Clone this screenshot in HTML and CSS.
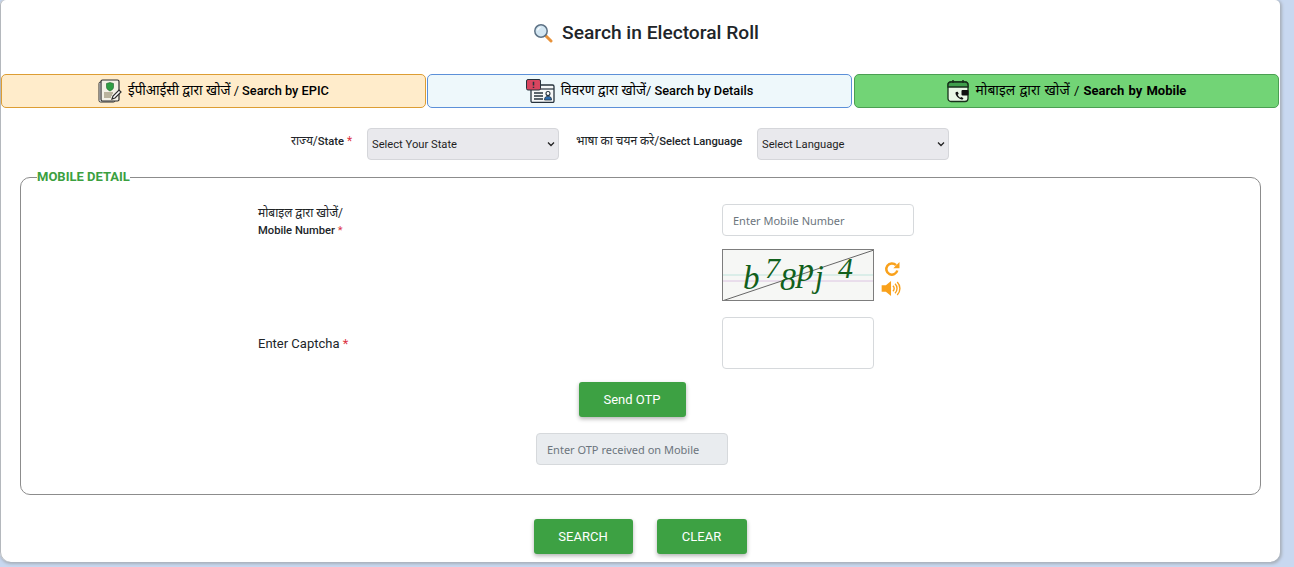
FILE: index.html
```html
<!DOCTYPE html>
<html lang="hi">
<head>
<meta charset="utf-8">
<title>Search in Electoral Roll</title>
<link rel="stylesheet" href="styles.css">
</head>
<body>
<main class="card">
  <h1 class="title">
    <svg class="title-icon" viewBox="0 0 20 20" width="20" height="20">
      <path d="M12.5 12.5l5.5 5.5" stroke="#e8923a" stroke-width="3" stroke-linecap="round"/>
      <circle cx="8" cy="8" r="6.2" fill="#d3e6f2" stroke="#5d7285" stroke-width="1.5"/>
      <path d="M4.6 7.5a3.6 3.6 0 0 1 3-3" fill="none" stroke="#fff" stroke-width="1.2"/>
    </svg>
    <span>Search in Electoral Roll</span>
  </h1>

  <nav class="tabs">
    <button class="tab tab-epic" type="button">
      <svg class="tab-icon" viewBox="0 0 24 24" width="24" height="24">
        <rect x="1" y="3" width="16" height="20" rx="1.5" fill="#fff" stroke="#2d2d2d" stroke-width="1"/>
        <rect x="3" y="1" width="18" height="21" rx="1.5" fill="#f4f1e6" stroke="#2d2d2d" stroke-width="1.2"/>
        <path d="M8.5 4.5l3.5-1 3.5 1v3.5c0 2-1.5 3-3.5 4-2-1-3.500-2-3.500-4z" fill="#2f9e44" stroke="#1c5f2a" stroke-width=".6"/>
        <path d="M6 14h9M6 16h8M6 18h7" stroke="#a79f85" stroke-width="1.300"/>
        <path d="M14 20l1-3 6-6 2 2-6 6z" fill="#fff" stroke="#2d2d2d" stroke-width="1.200"/>
      </svg>
      <span class="tab-text"><span class="tab-hi">ईपीआईसी द्वारा खोजें</span> / <b>Search by EPIC</b></span>
    </button>
    <button class="tab tab-details" type="button">
      <svg class="tab-icon tab-icon-wide" viewBox="0 0 29 24" width="29" height="24">
        <rect x="5" y="6" width="23" height="17.500" rx="1.500" fill="#f6f8f8" stroke="#27333d" stroke-width="1.300"/>
        <path d="M5 10h23" stroke="#27333d" stroke-width="1.200"/>
        <path d="M8 14h9M8 17h9M8 20h9" stroke="#27333d" stroke-width="1.300"/>
        <circle cx="22" cy="14.500" r="2" fill="#fff" stroke="#27333d" stroke-width="1.100"/>
        <path d="M18.500 21c0-3 1.500-3.700 3.500-3.700s3.500.7 3.500 3.700z" fill="#2b6cb0" stroke="#27333d" stroke-width=".8"/>
        <rect x=".5" y=".5" width="14" height="10.500" rx="1.500" fill="#d9455f" stroke="#27333d" stroke-width="1"/>
        <path d="M7.500 2.800v3.700M7.500 7.800v1.200" stroke="#27333d" stroke-width="1.500"/>
      </svg>
      <span class="tab-text"><span class="tab-hi">विवरण द्वारा खोजें</span>/ <b>Search by Details</b></span>
    </button>
    <button class="tab tab-mobile" type="button">
      <svg class="tab-icon" viewBox="0 0 23 24" width="23" height="24">
        <rect x="1" y="3" width="20" height="19.500" rx="3" fill="#e9f7e6" stroke="#17301b" stroke-width="1.300"/>
        <path d="M1 8V6a3 3 0 0 1 3-3h14a3 3 0 0 1 3 3v2z" fill="#3f9e4c" stroke="#17301b" stroke-width="1.300"/>
        <path d="M6 1v3M16 1v3" stroke="#17301b" stroke-width="1.500"/>
        <path d="M9 13c-1.500 1 .5 6 5.500 7.500 1.500 .3 2-1 1.700-1.600l-2-1-1 .8c-1-.5-2-1.600-2.500-3l1-1-1-2z" fill="#111"/>
        <rect x="14.500" y="11" width="7" height="5.500" rx="1" fill="#111"/>
      </svg>
      <span class="tab-text"><span class="tab-hi">मोबाइल द्वारा खोजें</span> / <b>Search by Mobile</b></span>
    </button>
  </nav>

  <section class="selectors">
    <label class="select-label select-label-state" for="state">राज्य/<b>State</b> <i class="req">*</i></label>
    <select class="select" id="state"><option>Select Your State</option></select>
    <label class="select-label select-label-lang" for="language">भाषा का चयन करे/<b>Select Language</b></label>
    <select class="select" id="language"><option>Select Language</option></select>
  </section>

  <fieldset class="panel">
    <legend class="panel-title">MOBILE DETAIL</legend>
    <div class="form-grid">
      <label class="field-label" for="mobile"><span class="hi">मोबाइल द्वारा खोजें/</span><b>Mobile Number</b> <i class="req">*</i></label>
      <input class="input" id="mobile" type="text" placeholder="Enter Mobile Number">

      <div class="captcha-cell">
        <svg class="captcha" viewBox="0 0 152 52" width="152" height="52">
          <rect width="152" height="52" fill="#f6f7f5"/>
          <path d="M0 26h152" stroke="#bfe4dc" stroke-width="1"/>
          <path d="M0 32h152" stroke="#dcc4e2" stroke-width="1"/>
          <path d="M0 52L152 1" stroke="#666" stroke-width="1"/>
          <g class="captcha-text">
            <text x="21" y="40" font-size="33">b</text>
            <text x="43" y="29" font-size="30">7</text>
            <text x="58" y="41" font-size="32">8</text>
            <text x="75" y="32" font-size="34">p</text>
            <text x="93" y="38" font-size="31">j</text>
            <text x="116" y="29" font-size="30">4</text>
          </g>
          <rect x=".5" y=".5" width="151" height="51" fill="none" stroke="#7d7d7d"/>
        </svg>
        <div class="captcha-actions">
          <svg viewBox="0 0 16 16" width="16" height="16">
            <path d="M13.300 9.500a5.600 5.600 0 1 1-1.300-5.300" fill="none" stroke="#f9a11b" stroke-width="2.500"/>
            <path d="M15.500 1v6.200H9.300z" fill="#f9a11b"/>
          </svg>
          <svg viewBox="0 0 21 16" width="21" height="15">
            <path d="M0 4.500h4.500L10 0v16l-5.500-4.500H0z" fill="#f9a11b"/>
            <path d="M12 5a4 4 0 0 1 0 6M14.300 3a7 7 0 0 1 0 10M16.600 1a10 10 0 0 1 0 14" fill="none" stroke="#f9a11b" stroke-width="1.500"/>
          </svg>
        </div>
      </div>

      <label class="field-label field-label-captcha" for="captcha">Enter Captcha <i class="req">*</i></label>
      <input class="input input-captcha" id="captcha" type="text">
    </div>
    <div class="otp-block">
      <button class="btn btn-otp" type="button">Send OTP</button>
      <input class="input input-otp" type="text" placeholder="Enter OTP received on Mobile" disabled>
    </div>
  </fieldset>

  <div class="actions">
    <button class="btn btn-search" type="button">SEARCH</button>
    <button class="btn btn-clear" type="button">CLEAR</button>
  </div>
</main>
</body>
</html>
```
FILE: styles.css
```css
* { box-sizing: border-box; }

html, body { height: 100%; }

body {
  margin: 0;
  background: #c8d8f0;
  font-family: Roboto, "Noto Sans", "Liberation Sans", sans-serif;
  color: #212529;
  overflow: hidden;
}

.card {
  width: 1280px;
  height: 562px;
  background: #fff;
  border-radius: 5px 5px 10px 10px;
  box-shadow: 1px 1px 3px 1px #a8b0ba, inset 1px 0 0 #b4b8bd;
  padding-top: 19px;
}

.title {
  display: flex;
  justify-content: center;
  align-items: center;
  gap: 9px;
  height: 27px;
  margin: 0 0 28px;
  padding-left: 12px;
  font-size: 19.2px;
  font-weight: 500;
  line-height: 27px;
  color: #212529;
}

.tabs {
  display: grid;
  grid-template-columns: 425px 425px 425px;
  column-gap: 1px;
  padding-left: 1px;
  height: 34px;
}

.tab {
  display: flex;
  justify-content: center;
  align-items: center;
  gap: 6px;
  height: 34px;
  padding: 0;
  border: 1px solid;
  border-radius: 5px;
  font-family: inherit;
  font-size: 12.8px;
  color: #000;
}

.tab b { font-weight: 500; }

.tab-hi { font-size: 13.5px; }

.tab-text { margin-bottom: 2px; }

.tab-epic { background: #ffeccb; border-color: #dd9d33; }
.tab-details { background: #eef8fb; border-color: #5c90d8; }
.tab-mobile { background: #72d476; border-color: #4b9f52; margin: 0 -1px 0 1px; font-size: 13px; word-spacing: 1px; }
.tab-mobile b { font-weight: 700; }
.tab-mobile .tab-hi { font-size: 13.8px; }
.tab-mobile .tab-text { margin-bottom: 4px; }

.selectors {
  display: flex;
  align-items: flex-start;
  height: 32px;
  margin: 20px 0 0;
  padding-left: 291px;
}

.select-label {
  font-size: 12px;
  line-height: 27px;
  color: #212529;
  white-space: nowrap;
}

.select-label b { font-weight: 500; font-size: 11.2px; }

.select-label-state { width: 76px; }
.select-label-lang { width: 198px; padding-left: 17px; }

.select {
  appearance: none;
  width: 192px;
  height: 32px;
  padding: 0 0 0 4px;
  border: 1px solid #d5d6da;
  border-radius: 4px;
  background-color: #e9e9ed;
  background-image: url("data:image/svg+xml,%3Csvg xmlns='http://www.w3.org/2000/svg' width='8' height='6' viewBox='0 0 8 6'%3E%3Cpath d='M1 1.500l3 3 3-3' fill='none' stroke='%23222' stroke-width='1.300'/%3E%3C/svg%3E");
  background-repeat: no-repeat;
  background-position: right 3px center;
  font-family: inherit;
  font-size: 11.2px;
  color: #1f1f1f;
}

.req { color: #dc3545; font-style: normal; }

.panel {
  width: 1241px;
  height: 326px;
  margin: 9px 0 0 20px;
  padding: 0 0 0 237px;
  border: 1px solid #8c8c8c;
  border-radius: 10px;
  min-width: 0;
}

.panel-title {
  margin-left: -221px;
  padding: 0 0 2px;
  font-size: 13px;
  line-height: 15px;
  font-weight: 700;
  color: #3ba040;
}

.form-grid {
  display: grid;
  grid-template-columns: 464px 192px;
  grid-template-rows: 32px auto 52px;
  row-gap: 13px;
  padding-top: 18px;
}

.field-label {
  padding-top: 1px;
  font-size: 11.2px;
  line-height: 17px;
  color: #212529;
}

.field-label b { font-weight: 500; }

.field-label .hi { display: block; font-size: 12px; }

.field-label-captcha {
  grid-column: 1;
  grid-row: 3;
  align-self: center;
  font-size: 13px;
}

.input {
  width: 192px;
  height: 32px;
  padding: 0 10px;
  border: 1px solid #d6d9dc;
  border-radius: 4px;
  background: #fff;
  font-family: "Noto Sans", "Open Sans", sans-serif;
  font-size: 11px;
}

.input::placeholder { color: #6c757d; opacity: 1; }

.captcha-cell {
  grid-column: 2;
  grid-row: 2;
  display: flex;
  align-items: flex-start;
  gap: 7px;
  margin-bottom: 3px;
}

.captcha { display: block; flex: none; }

.captcha-text {
  font-family: "Liberation Serif", serif;
  font-style: italic;
  fill: #11601c;
}

.captcha-actions {
  display: flex;
  flex-direction: column;
  align-items: center;
  gap: 4px;
  padding-top: 12px;
  width: 21px;
}

.input-captcha {
  grid-column: 2;
  grid-row: 3;
  width: 152px;
  height: 52px;
}

.otp-block {
  display: flex;
  flex-direction: column;
  align-items: center;
  gap: 16px;
  width: 1222px;
  margin-top: 13px;
  margin-left: -237px;
}

.btn {
  border: 0;
  border-radius: 3px;
  background: #3da143;
  color: #fff;
  font-family: inherit;
  font-size: 13px;
  height: 35px;
  box-shadow: 0 2px 4px rgba(0, 0, 0, .3);
}

.btn-otp { width: 107px; }

.input-otp { background: #e9ecef; flex: none; }

.actions {
  display: flex;
  justify-content: center;
  gap: 24px;
  margin-top: 24px;
}

.btn-search { width: 99px; }
.btn-clear { width: 90px; }
```
